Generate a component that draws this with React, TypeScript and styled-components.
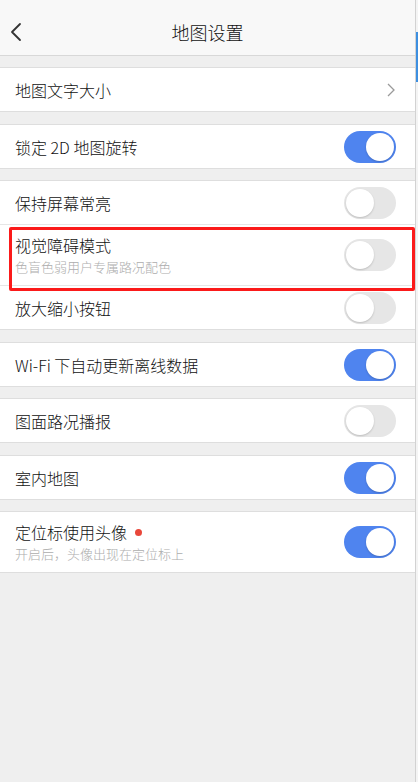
import styled, { createGlobalStyle } from "styled-components";

interface SwitchProps {
  on: boolean;
}

interface SettingRow {
  id: string;
  title: string;
  desc?: string;
  on?: boolean;
  link?: boolean;
  dot?: boolean;
  marked?: boolean;
}

const groups: SettingRow[][] = [
  [{ id: "font", title: "地图文字大小", link: true }],
  [{ id: "rotate", title: "锁定 2D 地图旋转", on: true }],
  [
    { id: "screen", title: "保持屏幕常亮", on: false },
    {
      id: "vision",
      title: "视觉障碍模式",
      desc: "色盲色弱用户专属路况配色",
      on: false,
      marked: true,
    },
    { id: "zoom", title: "放大缩小按钮", on: false },
  ],
  [{ id: "offline", title: "Wi-Fi 下自动更新离线数据", on: true }],
  [{ id: "traffic", title: "图面路况播报", on: false }],
  [{ id: "indoor", title: "室内地图", on: true }],
  [
    {
      id: "avatar",
      title: "定位标使用头像",
      desc: "开启后，头像出现在定位标上",
      on: true,
      dot: true,
    },
  ],
];

export default function App() {
  return (
    <>
      <GlobalStyle />
      <Screen>
        <Main>
          <Header>
            <BackButton aria-label="返回">
              <svg width="12" height="20" viewBox="0 0 12 20">
                <path
                  d="M10 2 L2 10 L10 18"
                  fill="none"
                  stroke="#333"
                  strokeWidth="1.8"
                  strokeLinecap="round"
                  strokeLinejoin="round"
                />
              </svg>
            </BackButton>
            <Title>地图设置</Title>
          </Header>

          {groups.map((group, i) => (
            <Group key={i} $gap={i % 2 ? 12 : 11}>
              {group.map((row) => (
                <Row key={row.id} tall={!!row.desc} marked={row.marked}>
                  <Texts>
                    <RowTitle>
                      {row.title}
                      {row.dot && <Dot />}
                    </RowTitle>
                    {row.desc && <RowDesc>{row.desc}</RowDesc>}
                  </Texts>
                  {row.link ? (
                    <svg width="10" height="16" viewBox="0 0 10 16">
                      <path
                        d="M2 2 L8 8 L2 14"
                        fill="none"
                        stroke="#9a9a9a"
                        strokeWidth="1.3"
                      />
                    </svg>
                  ) : (
                    <Switch on={!!row.on}>
                      <Knob on={!!row.on} />
                    </Switch>
                  )}
                </Row>
              ))}
            </Group>
          ))}
        </Main>
        <Rail>
          <RailThumb />
        </Rail>
      </Screen>
    </>
  );
}

const GlobalStyle = createGlobalStyle`
  html, body {
    margin: 0;
    padding: 0;
    background: #efefef;
  }
  body {
    font-family: "Noto Sans CJK SC", "Noto Sans", sans-serif;
  }
`;

const Screen = styled.div`
  display: flex;
  width: 418px;
  min-height: 782px;
  background: #efefef;
`;

const Main = styled.div`
  width: 415px;
  display: flex;
  flex-direction: column;
`;

const Rail = styled.div`
  width: 2px;
  border-left: 1px solid #d2d2d2;
  background: #f4f4f4;
  padding-top: 32px;
`;

const RailThumb = styled.div`
  height: 50px;
  background: #3d8fe0;
`;

const Header = styled.header`
  height: 55px;
  display: flex;
  align-items: center;
  justify-content: center;
  position: relative;
  background: #f8f8f8;
  border-bottom: 1px solid #d8d8d8;
`;

const BackButton = styled.button`
  position: absolute;
  left: 10px;
  top: 22px;
  padding: 0;
  border: none;
  background: none;
  display: flex;
`;

const Title = styled.h1`
  margin: 0;
  font-size: 18px;
  font-weight: 300;
  color: #111;
  padding-top: 8px;
`;

const Group = styled.section<{ $gap: number }>`
  margin-top: ${(p) => p.$gap}px;
  background: #fff;
  border-top: 1px solid #dedede;
  border-bottom: 1px solid #dedede;
`;

const Row = styled.div<{ tall: boolean; marked?: boolean }>`
  height: ${(p) => (p.tall ? 60 : 43)}px;
  padding: 0 19px 0 15px;
  display: flex;
  align-items: center;
  justify-content: space-between;
  position: relative;

  & + & {
    border-top: 1px solid #e6e6e6;
  }

  ${(p) =>
    p.marked &&
    `
    &::after {
      content: "";
      position: absolute;
      left: 9px;
      right: 0;
      top: 2px;
      bottom: -6px;
      border: 3px solid #fb1a1a;
      border-radius: 2px;
      z-index: 1;
      pointer-events: none;
    }
  `}
`;

const Texts = styled.div`
  display: flex;
  flex-direction: column;
  gap: 3px;
`;

const RowTitle = styled.span`
  display: flex;
  align-items: center;
  font-size: 16px;
  font-weight: 300;
  line-height: 20px;
  color: #111;
`;

const Dot = styled.span`
  width: 7px;
  height: 7px;
  margin-left: 8px;
  border-radius: 50%;
  background: #e9473a;
`;

const RowDesc = styled.span`
  font-size: 13px;
  font-weight: 300;
  line-height: 17px;
  color: #adadad;
`;

const Switch = styled.div<SwitchProps>`
  width: 52px;
  height: 32px;
  box-sizing: border-box;
  border-radius: 16px;
  padding: 2px;
  display: flex;
  justify-content: ${(p) => (p.on ? "flex-end" : "flex-start")};
  background: ${(p) => (p.on ? "#4f84ef" : "#e6e6e6")};
`;

const Knob = styled.div<SwitchProps>`
  width: 28px;
  height: 28px;
  border-radius: 50%;
  background: #fff;
  box-shadow: 0 1px 2px rgba(0, 0, 0, 0.18);
`;
